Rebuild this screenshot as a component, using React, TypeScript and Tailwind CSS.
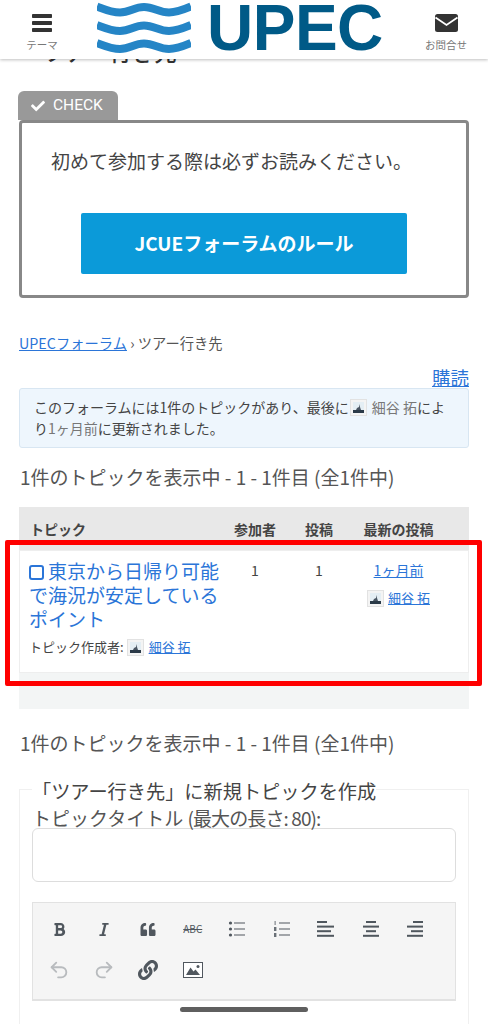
import React from "react";
import { FaCheck, FaBold, FaItalic, FaQuoteLeft, FaLink } from "react-icons/fa";
import { Undo2, Redo2 } from "lucide-react";

const Avatar = ({ className = "" }: { className?: string }) => (
  <svg viewBox="0 0 17 17" className={"inline-block w-[17px] h-[17px] shrink-0 " + className}>
    <rect x="0.5" y="0.5" width="16" height="16" fill="#f4f4f4" stroke="#e2e2e2" />
    <rect x="3" y="3" width="11" height="11" fill="#e4eef4" />
    <rect x="3" y="11" width="11" height="3" fill="#2b3a48" />
    <path d="M6 11 L11 11 L10 8 L9.5 5 L9 8 L7 9 Z" fill="#4a5663" />
  </svg>
);

const Line = ({ lines }: { lines: [number, number][] }) => (
  <svg viewBox="0 0 18 18" className="w-[18px] h-[18px]">
    {lines.map(([x, w], i) => (
      <rect key={i} x={x} y={1 + i * 4.6} width={w} height="2" fill="#50575e" />
    ))}
  </svg>
);

const BulList = () => (
  <svg viewBox="0 0 18 18" className="w-[18px] h-[18px]">
    {[3, 9, 15].map((y) => (
      <g key={y}>
        <circle cx="2.5" cy={y} r="1.6" fill="#50575e" />
        <rect x="6" y={y - 0.5} width="11" height="1" fill="#50575e" />
      </g>
    ))}
  </svg>
);

const NumList = () => (
  <svg viewBox="0 0 18 18" className="w-[18px] h-[18px]">
    {[3, 9, 15].map((y, i) => (
      <g key={y}>
        <rect x={i === 0 ? 1.6 : 1} y={y - 2} width={i === 0 ? 1 : 2.4} height="4" fill="#6a7077" />
        <rect x="6" y={y - 0.5} width="11" height="1" fill="#50575e" />
      </g>
    ))}
  </svg>
);

const ImageIcon = () => (
  <svg viewBox="0 0 20 16" className="w-[20px] h-[16px]">
    <rect x="0.5" y="0.5" width="19" height="15" fill="#fff" stroke="#50575e" />
    <path d="M3 13 L7.5 5.5 L10.5 9.5 L12.5 7.5 L17 13 Z" fill="#50575e" />
    <circle cx="15" cy="4.5" r="1.5" fill="#50575e" />
  </svg>
);

const MenuIcon = () => (
  <svg viewBox="0 0 20 18" className="w-[20px] h-[18px]">
    {[0, 7, 14].map((y) => (
      <rect key={y} x="0" y={y} width="20" height="4" rx="0.8" fill="#333" />
    ))}
  </svg>
);

const MailIcon = () => (
  <svg viewBox="0 0 23 18" className="w-[23px] h-[18px]">
    <rect x="0" y="0" width="23" height="18" rx="2.5" fill="#333" />
    <path d="M0.5 3.5 L11.5 11 L22.5 3.5" fill="none" stroke="#fff" strokeWidth="1.8" />
  </svg>
);

const Cell = ({ children }: { children: React.ReactNode }) => (
  <div className="w-[44.5px] h-[40px] flex items-center justify-center">{children}</div>
);

const wave = (c: number) =>
  `M0 ${c - 3} C 8 ${c}, 15 ${c + 3}, 23 ${c + 3} C 33 ${c + 3}, 37 ${c - 2.5}, 47 ${c - 2.5} C 57 ${c - 2.5}, 62 ${c + 3}, 72 ${c + 3} C 80 ${c + 3}, 87 ${c}, 94 ${c - 3}`;

export default function App() {
  return (
    <div
      className="relative w-[488px] h-[1024px] overflow-hidden bg-white text-[#444]"
      style={{ fontFamily: '"Noto Sans CJK JP", "Noto Sans", sans-serif' }}
    >
      <header className="relative z-10 h-[59px] bg-white shadow-[0_1px_3px_rgba(0,0,0,0.25)] flex items-start">
        <div className="w-[84px] flex flex-col items-center pt-[14px]">
          <MenuIcon />
          <span className="text-[10.5px] leading-[14px] mt-[6px] text-[#777]">テーマ</span>
        </div>
        <div className="flex items-start ml-[13px] h-[59px]">
          <svg viewBox="0 0 94 59" className="w-[94px] h-[59px]">
            {[9.5, 28, 46].map((c) => (
              <path key={c} d={wave(c)} fill="none" stroke="#2585c6" strokeWidth="8" />
            ))}
          </svg>
          <span
            className="ml-[16px] text-[#005a87] font-bold text-[64px] leading-[56px] tracking-[-0.5px]"
            style={{ fontFamily: '"Liberation Sans", sans-serif' }}
          >
            UPEC
          </span>
        </div>
        <div className="ml-auto w-[66px] mr-[9px] flex flex-col items-center pt-[14px]">
          <MailIcon />
          <span className="text-[10.5px] leading-[14px] mt-[6px] text-[#777] whitespace-nowrap">お問合せ</span>
        </div>
      </header>

      <div className="h-[7px] overflow-hidden">
        <h1 className="mt-[-23px] ml-[43px] text-[22.5px] leading-[30px] font-medium text-[#333] whitespace-nowrap">ツアー行き先</h1>
      </div>

      <div className="mx-[19px] mt-[25px]">
        <div
          className="ml-[-1px] w-[100px] h-[29px] bg-[#999] rounded-t-[6px] flex items-center pl-[12px] pt-[1px] text-white text-[15.5px]"
          style={{ fontFamily: 'Roboto, sans-serif' }}
        >
          <FaCheck className="w-[16px] h-[14px] mr-[7px]" />
          CHECK
        </div>
        <div className="h-[178px] border-[3px] border-[#888] rounded-[4px] pt-[24px] px-[29px]">
          <p className="text-[19px] leading-[28px] whitespace-nowrap">初めて参加する際は必ずお読みください。</p>
          <div className="mt-[38px] mx-[30px] h-[61px] bg-[#0b9ad9] rounded-[2px] flex items-center justify-center text-white font-bold text-[19px]">
            JCUEフォーラムのルール
          </div>
        </div>
      </div>

      <div className="mx-[19px] mt-[34px] text-[14.3px] leading-[22px] whitespace-nowrap text-[#555]">
        <a className="text-[#2b75d8] underline">UPECフォーラム</a> › ツアー行き先
      </div>

      <div className="mx-[19px] mt-[12px] text-right text-[18.5px] leading-[22px] h-[22px]">
        <a className="text-[#2b75d8] underline">購読</a>
      </div>

      <div className="mx-[19px] h-[60px] bg-[#eef6fd] border border-[#d8e6f2] rounded-[3px] pl-[14px] pr-[10px] pt-[8px] text-[14px] leading-[21px]">
        <div className="whitespace-nowrap flex items-center">
          このフォーラムには1件のトピックがあり、最後に
          <Avatar className="mx-[1px]" />
          <span className="text-[#777] ml-[4px]">細谷 拓</span>によ
        </div>
        <div>
          り<span className="text-[#777]">1ヶ月前</span>に更新されました。
        </div>
      </div>

      <p className="mx-[20px] mt-[16px] text-[19px] leading-[26px] text-[#555] whitespace-nowrap">1件のトピックを表示中 - 1 - 1件目 (全1件中)</p>

      <div className="mx-[19px] mt-[17px] bg-[#f3f5f5]">
        <div className="h-[43px] bg-[#e8e8e8] grid grid-cols-[205px_62px_66px_93px] items-end pb-[12px] text-[14px] leading-[18px] font-bold text-center">
          <span className="text-left pl-[11px]">トピック</span>
          <span>参加者</span>
          <span>投稿</span>
          <span className="whitespace-nowrap">最新の投稿</span>
        </div>
        <div className="h-[123px] bg-white border border-[#eee] grid grid-cols-[204px_62px_66px_93px] text-[14px] text-center">
          <div className="pl-[9px] pt-[8px] text-left">
            <a className="block w-[192px] text-[19px] leading-[24px] text-[#2b75d8]">
              <span className="inline-block w-[15px] h-[15px] border-2 border-[#2b75d8] rounded-[3px] align-[-1px] mr-[4px]" />
              東京から日帰り可能で海況が安定しているポイント
            </a>
            <div className="mt-[6px] flex items-center text-[13px] leading-[20px] whitespace-nowrap">
              トピック作成者:
              <Avatar className="ml-[3px] mr-[4px]" />
              <a className="text-[#2b75d8] underline ml-[1px]">細谷 拓</a>
            </div>
          </div>
          <div className="pt-[9px] leading-[20px]">1</div>
          <div className="pt-[9px] leading-[20px]">1</div>
          <div className="pt-[9px]">
            <a className="block text-[#2b75d8] underline text-[14px] leading-[20px]">1ヶ月前</a>
            <div className="mt-[8px] flex items-center justify-center text-[13px] leading-[20px]">
              <Avatar className="mr-[4px]" />
              <a className="text-[#2b75d8] underline">細谷 拓</a>
            </div>
          </div>
        </div>
        <div className="h-[36px]" />
      </div>

      <p className="mx-[20px] mt-[21px] text-[19px] leading-[26px] text-[#555] whitespace-nowrap">1件のトピックを表示中 - 1 - 1件目 (全1件中)</p>

      <fieldset className="relative mx-[19px] mt-[21px] h-[300px] border border-[#f0f0f0] px-[12px]">
        <legend className="text-[19.2px] pt-[4px] leading-[20px] whitespace-nowrap">「ツアー行き先」に新規トピックを作成</legend>
        <label className="block text-[19px] leading-[24px] mt-[5px] text-[#555] whitespace-nowrap">
          トピックタイトル <span className="tracking-[-0.9px]">(最大の長さ: 80):</span>
        </label>
        <div className="mt-[-2px] h-[54px] border border-[#ddd] rounded-[6px] bg-white" />
        <div className="mt-[20px] h-[99px] bg-[#f5f5f5] border border-[#e2e2e2] border-b-2 pl-[4px] pt-[6px]">
          <div className="flex">
            <Cell><FaBold className="w-[13px] h-[15px] text-[#50575e]" /></Cell>
            <Cell><FaItalic className="w-[12px] h-[15px] text-[#50575e]" /></Cell>
            <Cell><FaQuoteLeft className="w-[18px] h-[15px] text-[#50575e]" /></Cell>
            <Cell><span className="text-[10px] leading-none line-through text-[#50575e]">ABC</span></Cell>
            <Cell><BulList /></Cell>
            <Cell><NumList /></Cell>
            <Cell><Line lines={[[0, 10], [0, 17], [0, 14], [0, 17]]} /></Cell>
            <Cell><Line lines={[[4, 10], [1, 16], [4, 10], [1, 16]]} /></Cell>
            <Cell><Line lines={[[7, 10], [1, 16], [5, 12], [1, 16]]} /></Cell>
          </div>
          <div className="flex mt-[1px]">
            <Cell><Undo2 className="w-[22px] h-[22px] text-[#b8bbbe]" strokeWidth={2} /></Cell>
            <Cell><Redo2 className="w-[22px] h-[22px] text-[#b8bbbe]" strokeWidth={2} /></Cell>
            <Cell><FaLink className="w-[20px] h-[20px] text-[#50575e]" /></Cell>
            <Cell><ImageIcon /></Cell>
          </div>
        </div>
      </fieldset>

      <div className="absolute left-[5px] top-[540px] w-[477px] h-[146px] border-[5px] border-[#ff0000] rounded-[2px] pointer-events-none z-20" />
      <div className="absolute left-[180px] top-[1007px] w-[128px] h-[5px] rounded-full bg-[#5f5f5f] z-20" />
    </div>
  );
}
